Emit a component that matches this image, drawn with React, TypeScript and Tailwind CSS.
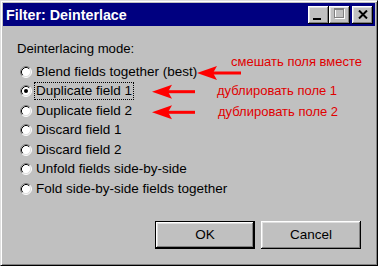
import React from 'react';

const options = [
  'Blend fields together (best)',
  'Duplicate field 1',
  'Duplicate field 2',
  'Discard field 1',
  'Discard field 2',
  'Unfold fields side-by-side',
  'Fold side-by-side fields together',
];

function Radio({ checked }: { checked: boolean }) {
  return (
    <svg width="12" height="12" viewBox="0 0 12 12" className="shrink-0">
      <circle cx="6" cy="6" r="5" fill="#fff" />
      <path d="M2.11 9.89 A5.5 5.5 0 0 1 9.89 2.11" fill="none" stroke="#808080" strokeWidth="1" />
      <path d="M9.89 2.11 A5.5 5.5 0 0 1 2.11 9.89" fill="none" stroke="#fff" strokeWidth="1" />
      <path d="M2.82 9.18 A4.5 4.5 0 0 1 9.18 2.82" fill="none" stroke="#000" strokeWidth="1" />
      <path d="M9.18 2.82 A4.5 4.5 0 0 1 2.82 9.18" fill="none" stroke="#dfdfdf" strokeWidth="1" />
      {checked && <circle cx="6" cy="6" r="2" fill="#000" />}
    </svg>
  );
}

const bevel =
  'shadow-[inset_-1px_-1px_#000,inset_1px_1px_#fff,inset_-2px_-2px_#808080,inset_2px_2px_#dfdfdf]';

export default function App() {
  return (
    <div className="relative w-[378px] h-[266px] bg-[#c0c0c0] font-['Liberation_Sans',Arial,sans-serif] text-black overflow-hidden">
      <div className="h-full border border-t-[#dfdfdf] border-l-[#dfdfdf] border-r-black border-b-black">
        <div className="h-full flex flex-col p-[2px] shadow-[inset_1px_1px_#fff,inset_-1px_-1px_#808080]">
          {/* Title bar */}
          <div className="h-[23px] bg-[#000080] flex items-center pl-[3px] pr-[2px]">
            <span className="text-white font-bold text-[14.3px] leading-4 flex-1">Filter: Deinterlace</span>
            <div className="flex items-center">
              <div className={`w-[21px] h-[18px] bg-[#c0c0c0] ${bevel} flex items-end justify-center pb-[4px] pr-[3px]`}>
                <div className="w-[8px] h-[2px] bg-black" />
              </div>
              <div className={`w-[21px] h-[18px] bg-[#c0c0c0] ${bevel} flex items-center justify-center pb-[1px]`}>
                <svg width="12" height="12" viewBox="0 0 12 12">
                  <rect x="1.5" y="1.5" width="9" height="9" fill="none" stroke="#fff" />
                  <rect x="0.5" y="0.5" width="9" height="9" fill="none" stroke="#808080" />
                  <line x1="1" y1="1.5" x2="9" y2="1.5" stroke="#808080" />
                </svg>
              </div>
              <div className={`ml-[2px] w-[21px] h-[18px] bg-[#c0c0c0] ${bevel} flex items-center justify-center pb-[1px]`}>
                <svg width="10" height="9" viewBox="0 0 10 9">
                  <path d="M1 0.5 L9 8.5 M9 0.5 L1 8.5" stroke="#000" strokeWidth="2" />
                </svg>
              </div>
            </div>
          </div>

          {/* Content */}
          <div className="flex-1 flex flex-col pl-[14px]">
            <div className="mt-[15px] text-[13.2px] leading-4">Deinterlacing mode:</div>
            <div className="mt-[5px] ml-[3px] flex flex-col">
              {options.map((label, i) => (
                <div key={label} className="h-[19.5px] flex items-center gap-[2px]">
                  <Radio checked={i === 1} />
                  <span
                    className={`text-[13.5px] leading-[16px] px-[1px] border ${
                      i === 1 ? 'border-dotted border-black' : 'border-transparent'
                    }`}
                  >
                    {label}
                  </span>
                </div>
              ))}
            </div>
            <div className="mt-auto flex justify-end gap-[6px] pr-[14px] pb-[14px]">
              <button className="w-[100px] h-[28px] border border-black bg-[#c0c0c0] p-0">
                <div className={`h-full flex items-center justify-center text-[13.5px] ${bevel}`}>OK</div>
              </button>
              <button className={`w-[100px] h-[28px] bg-[#c0c0c0] ${bevel} flex items-center justify-center text-[13.5px]`}>
                Cancel
              </button>
            </div>
          </div>
        </div>
      </div>

      {/* Annotations */}
      <svg className="absolute inset-0 pointer-events-none" width="378" height="266" viewBox="0 0 378 266">
        <g fill="#ff0000" stroke="none">
          <polygon points="197,73 217,66 213,73 217,80" />
          <rect x="213" y="71.5" width="28" height="3" />
          <polygon points="152,91.7 172,84.7 168,91.7 172,98.7" />
          <rect x="168" y="90.2" width="27" height="3" />
          <polygon points="152,112.3 172,105.3 168,112.3 172,119.3" />
          <rect x="168" y="110.8" width="27" height="3" />
        </g>
      </svg>
      <div className="absolute left-[231px] top-[54px] text-[13px] leading-4 text-[#e00000] whitespace-nowrap">
        смешать поля вместе
      </div>
      <div className="absolute left-[217px] top-[83px] text-[13px] leading-4 text-[#e00000] whitespace-nowrap">
        дублировать поле 1
      </div>
      <div className="absolute left-[218px] top-[104px] text-[13px] leading-4 text-[#e00000] whitespace-nowrap">
        дублировать поле 2
      </div>
    </div>
  );
}
